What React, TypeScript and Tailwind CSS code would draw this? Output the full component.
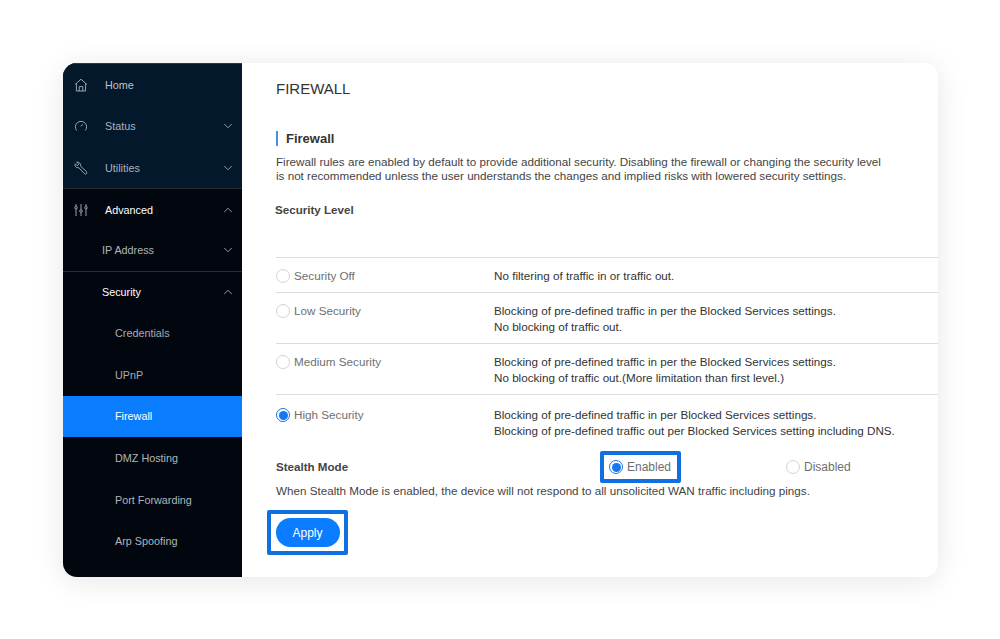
import React from "react";
import { ChevronDown, ChevronUp } from "lucide-react";

const font = { fontFamily: '"Liberation Sans", Arial, sans-serif' };

function HomeI() {
  return (
    <svg width="14" height="14" viewBox="0 0 14 14" fill="none" stroke="currentColor" strokeWidth="0.9">
      <path d="M1 6.6 7 1.2l6 5.4M2.4 5.6v7.4h9.2V5.6M5.2 13V8.6h3.6V13" />
    </svg>
  );
}
function GaugeI() {
  return (
    <svg width="14" height="14" viewBox="0 0 14 14" fill="none" stroke="currentColor" strokeWidth="0.9">
      <path d="M2.6 11.4A5.6 5.6 0 1 1 11.4 11.4M7 7.4 8.6 5.2" />
    </svg>
  );
}
function WrenchI() {
  return (
    <svg width="14" height="14" viewBox="0 0 14 14" fill="none" stroke="currentColor" strokeWidth="0.9">
      <path d="M2.6 1.2 4.8 3.2 3.2 4.8 1.2 2.8C.6 4.8 1.6 6.8 4 6.8l.8-.1 5.6 6c1.6 1.2 3.2-.6 2-2.2L6.6 5.2C7 2.6 5 .6 2.6 1.2z" />
    </svg>
  );
}
function SlidersI() {
  return (
    <svg width="14" height="14" viewBox="0 0 14 14" fill="none" stroke="currentColor" strokeWidth="0.9">
      <path d="M2 1v2.4M2 6.2V13M7 1v5.6M7 9.4V13M12 1v2.4M12 6.2V13" />
      <circle cx="2" cy="4.8" r="1.3" />
      <circle cx="7" cy="8" r="1.3" />
      <circle cx="12" cy="4.8" r="1.3" />
    </svg>
  );
}

function Row({
  label, icon, indent, color, chevron, height = "h-[41.6px]",
}: {
  label: string;
  icon?: React.ReactNode;
  indent: string;
  color: string;
  chevron?: "up" | "down";
  height?: string;
}) {
  return (
    <div className={`flex ${height} items-center ${indent} ${color} text-[10.8px]`}>
      {icon && <span className="mr-[17px] flex w-[14px] justify-center text-[#a9b3bd]">{icon}</span>}
      <span className="flex-1">{label}</span>
      {chevron === "down" && <ChevronDown size={14} strokeWidth={1.5} className="mr-[7px] text-[#a5aeb6]" />}
      {chevron === "up" && <ChevronUp size={14} strokeWidth={1.5} className="mr-[7px] text-[#a5aeb6]" />}
    </div>
  );
}

function Radio({ checked }: { checked?: boolean }) {
  return checked ? (
    <span className="flex h-[14px] w-[14px] shrink-0 items-center justify-center rounded-full border border-[#1677e8] bg-white">
      <span className="h-[9px] w-[9px] rounded-full bg-[#1677f0]" />
    </span>
  ) : (
    <span className="h-[14px] w-[14px] shrink-0 rounded-full border border-[#d4d4d4] bg-white" />
  );
}

function Level({
  label, lines, checked, h, pt,
}: {
  label: string;
  lines: string[];
  checked?: boolean;
  h: string;
  pt: string;
}) {
  return (
    <div className={`flex ${h} border-t border-[#dcdcdc] ${pt}`}>
      <div className="flex w-[218px] items-start">
        <Radio checked={checked} />
        <span className="ml-[4px] text-[11.7px] leading-[14px] text-[#6f6f6f]">{label}</span>
      </div>
      <div className="-mt-[1px] text-[11.67px] leading-[16px] text-[#333]">
        {lines.map((l) => (
          <div key={l}>{l}</div>
        ))}
      </div>
    </div>
  );
}

export default function App() {
  return (
    <div className="h-[639px] w-[1000px] bg-white pl-[63px] pt-[63px]" style={font}>
      <div className="flex h-[514px] w-[875px] overflow-hidden rounded-[14px] bg-white shadow-[0_4px_30px_rgba(0,0,0,0.10)]">
        <aside className="flex w-[179px] shrink-0 flex-col bg-[#01060f]">
          <div className="h-[125px] border-t border-[#2c3a46] bg-[#03182b]">
            <Row label="Home" icon={<HomeI />} indent="pl-[11px]" color="text-[#bcc4cb]" />
            <Row label="Status" icon={<GaugeI />} indent="pl-[11px]" color="text-[#a9b3bd]" chevron="down" />
            <Row label="Utilities" icon={<WrenchI />} indent="pl-[11px]" color="text-[#a9b3bd]" chevron="down" />
          </div>
          <div className="border-t border-[#232d38]">
            <Row label="Advanced" icon={<SlidersI />} indent="pl-[11px]" color="text-white" chevron="up" />
            <div className="h-[41px] border-b border-[#2b3038]">
              <Row label="IP Address" indent="pl-[39px]" color="text-[#b1b5bb]" chevron="down" height="h-[39px]" />
            </div>
            <Row label="Security" indent="pl-[39px]" color="text-white" chevron="up" height="h-[41px]" />
            <Row label="Credentials" indent="pl-[52px]" color="text-[#a8acb2]" />
            <Row label="UPnP" indent="pl-[52px]" color="text-[#a8acb2]" />
            <div className="bg-[#0a7cff]">
              <Row label="Firewall" indent="pl-[52px]" color="text-white" />
            </div>
            <Row label="DMZ Hosting" indent="pl-[52px]" color="text-[#b1b5bb]" />
            <Row label="Port Forwarding" indent="pl-[52px]" color="text-[#b1b5bb]" />
            <Row label="Arp Spoofing" indent="pl-[52px]" color="text-[#b1b5bb]" />
          </div>
        </aside>
        <main className="flex-1 pl-[34px]">
          <h1 className="mt-[17px] text-[15px] leading-[18px] text-[#333]">FIREWALL</h1>
          <h2 className="mt-[33px] flex h-[15px] items-center border-l-2 border-[#4a90e2] pl-[8px] text-[13px] font-bold text-[#333]">
            Firewall
          </h2>
          <p className="mt-[9px] text-[11.67px] leading-[14px] text-[#444]">
            Firewall rules are enabled by default to provide additional security. Disabling the firewall or changing the security level
            <br />
            is not recommended unless the user understands the changes and implied risks with lowered security settings.
          </p>
          <h3 className="mt-[20px] -ml-[1px] text-[11.6px] font-bold leading-[13px] text-[#444]">Security Level</h3>
          <div className="mt-[41px]">
            <Level h="h-[35px]" pt="pt-[11px]" label="Security Off" lines={["No filtering of traffic in or traffic out."]} />
            <Level h="h-[51px]" pt="pt-[11px]" label="Low Security" lines={["Blocking of pre-defined traffic in per the Blocked Services settings.", "No blocking of traffic out."]} />
            <Level h="h-[51px]" pt="pt-[11px]" label="Medium Security" lines={["Blocking of pre-defined traffic in per the Blocked Services settings.", "No blocking of traffic out.(More limitation than first level.)"]} />
            <Level h="h-[57px]" pt="pt-[13px]" checked label="High Security" lines={["Blocking of pre-defined traffic in per Blocked Services settings.", "Blocking of pre-defined traffic out per Blocked Services setting including DNS."]} />
          </div>
          <div className="flex h-[32px] items-center">
            <span className="w-[324px] text-[11.6px] font-bold text-[#444]">Stealth Mode</span>
            <div className="flex h-[32px] w-[81px] items-center rounded-[2px] border-[4px] border-[#1170e0] pl-[5px]">
              <Radio checked />
              <span className="ml-[4px] text-[12px] text-[#6f6f6f]">Enabled</span>
            </div>
            <div className="ml-[105px] flex items-center">
              <Radio />
              <span className="ml-[4px] text-[12px] text-[#6f6f6f]">Disabled</span>
            </div>
          </div>
          <p className="mt-[1px] text-[11.67px] leading-[14px] text-[#444]">
            When Stealth Mode is enabled, the device will not respond to all unsolicited WAN traffic including pings.
          </p>
          <div className="-ml-[9px] mt-[12px] flex h-[45px] w-[81px] items-center justify-center rounded-[2px] border-[4px] border-[#1170e0]">
            <button className="h-[29px] w-[64px] rounded-full bg-[#0a7cff] text-[12px] text-white">Apply</button>
          </div>
        </main>
      </div>
    </div>
  );
}
